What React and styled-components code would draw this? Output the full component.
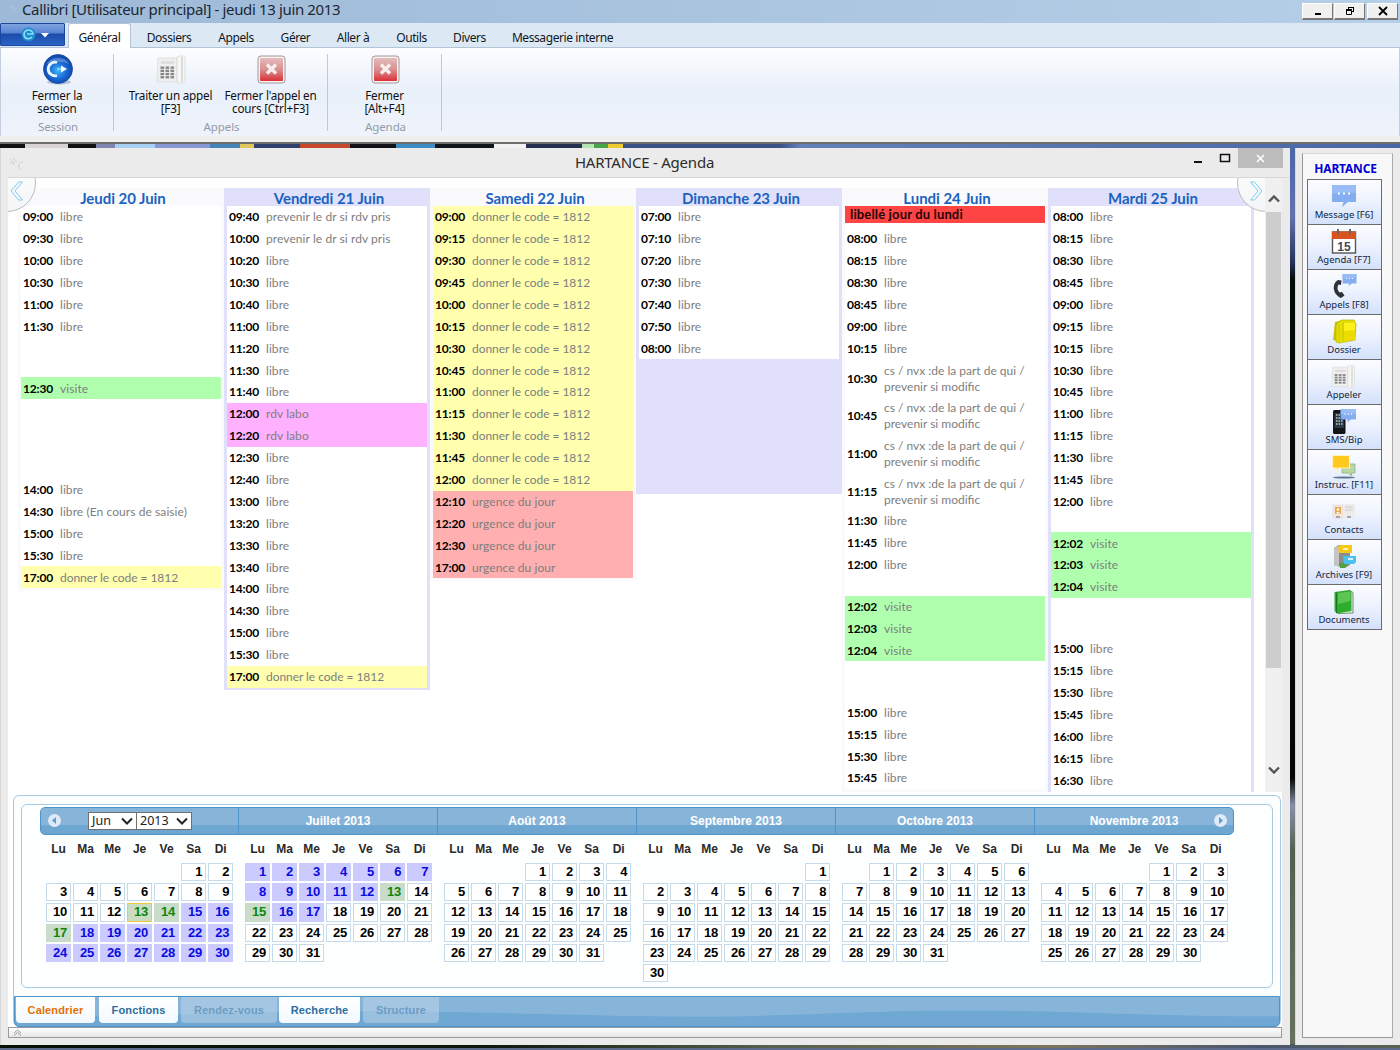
import React from "react";
import styled, { createGlobalStyle, css } from "styled-components";

const ui = `"Noto Sans", "Open Sans", sans-serif`;
const cal = `Lato, "Open Sans", sans-serif`;
const arial = `"Liberation Sans", Arial, sans-serif`;

const Global = createGlobalStyle`
  * { box-sizing: border-box; }
  body { margin: 0; width: 1400px; height: 1050px; overflow: hidden; }
`;

/* ---------- shell ---------- */
const Desktop = styled.div`
  width: 1400px; height: 1050px; display: flex; flex-direction: column; overflow: hidden;
  font-family: ${ui}; color: #111;
`;
const TitleBar = styled.header`
  height: 23px; display: flex; align-items: flex-start; justify-content: space-between;
  padding: 0 2px 0 9px; background: linear-gradient(90deg, #9db9d7, #b6cfe8);
`;
const AppTitle = styled.div`
  display: flex; gap: 3px; align-items: center; height: 18px; font-size: 15px; line-height: 17px;
  letter-spacing: -0.36px; color: #1c2630; white-space: nowrap;
`;
const WinButtons = styled.div`display: flex; padding-top: 3px;`;
const WinButton = styled.button`
  width: 31px; height: 17px; padding: 0; background: #f0f0f0; border: 1px solid #fff; margin-left: ${(p) => p.$ml || 1}px;
  border-right: 1px solid #777; border-bottom: 2px solid #777; display: flex; align-items: center; justify-content: center;
`;
const TabStrip = styled.nav`
  height: 25px; display: flex; background: #dde8f5; border-bottom: 1px solid #b4c4d8; align-items: flex-end;
`;
const AppButton = styled.button`
  width: 65px; height: 23px; margin: 0 3px 1px 0; padding: 0 0 0 4px; border: 1px solid #1c47a0; border-radius: 1px;
  background: linear-gradient(#7ea3e0 0, #5c86d4 40%, #1c4cab 50%, #2a63c6 100%);
  display: flex; align-items: center; justify-content: center; gap: 5px;
`;
const RibbonTab = styled.button`
  width: ${(p) => p.$w}px; height: 24px; padding: 3px 0 0; font: 12px/19px ${ui}; letter-spacing: -0.42px; color: #10181f;
  border: 1px solid transparent; border-bottom: 0; background: none; margin: 0; white-space: nowrap;
  ${(p) => p.$on && css`height: 25px; margin: 0 3px -1px 0; background: #fff; border-color: #b4c4d8; border-radius: 3px 3px 0 0; letter-spacing: -0.3px;`}
`;
const Ribbon = styled.div`
  height: 88px; display: flex; padding-top: 6px; border-left: 1px solid #c4d0e0; border-right: 1px solid #c4d0e0;
  background: linear-gradient(#fcfdff 0, #e9f0fa 50%, #eff3fb 100%);
`;
const Group = styled.section`
  width: ${(p) => p.$w}px; height: 77px; border-right: 1px solid #bcc8dc; display: grid; grid-template-rows: 62px 15px;
`;
const GroupItems = styled.div`display: flex; justify-content: center;`;
const GroupName = styled.div`
  text-align: center; font-size: 11.5px; line-height: 22px; letter-spacing: -0.1px; color: #949ba6; padding-left: 2px;
`;
const RibbonItem = styled.button`
  width: ${(p) => p.$w}px; border: 0; background: none; padding: 0; display: flex; flex-direction: column; align-items: center;
  font: 11.7px/13px ${ui}; letter-spacing: -0.2px; color: #111; white-space: pre; text-align: center;
  svg { margin: 0 0 4px 2px; flex: none; }
`;
const StatusEdge = styled.div`height: 8px; background: #eeeeec; border-bottom: 2px solid #6e6e6e;`;

/* ---------- work area ---------- */
const Backdrop = styled.main`
  flex: 1; padding-top: 4px; display: flex; gap: 5px; align-items: flex-start;
  background:
    linear-gradient(#5e6c8e, #5e6c8e) 0 100% / 100% 2px no-repeat,
    linear-gradient(90deg, #061006 0, #0c180c 35%, #56604c 55%, #7c755c 75%, #4a566e 90%, #5b6350) 0 100% / 100% 6px no-repeat,
    linear-gradient(90deg, #111 0 25px, #d8d4d8 25px 68px, #111 68px 96px, #8086b0 96px 115px, #a8d0f4 115px 155px, #8898d4 155px 210px, #4584b8 210px 240px, #e0c85c 240px 254px, #30406c 254px 300px, #c8482c 300px 350px, #101218 350px 396px, #3d8cc4 396px 435px, #12141c 435px 494px, #f2f2f2 494px 526px, #24304e 526px 582px, #b4e4b0 582px 594px, #48a448 594px 608px, #eecb30 608px 623px, #3a5288 623px 780px, #6480b8 800px, #4a66a4) 0 0 / 100% 4px no-repeat,
    linear-gradient(#4a66a8 0, #6272ae 8%, #26345c 13%, #060a0a 15%, #050805 70%, #8890a8 73%, #56604f 78%, #66715f 100%);
`;
const AgendaWindow = styled.section`
  width: 1290px; height: 897px; background: #ebebeb; border-left: 1px solid #d6d6d6; padding: 0 8px 0 7px;
`;
const AgendaBar = styled.div`height: 30px; display: grid; grid-template-columns: 120px 1fr 129px; margin-right: -8px; border-bottom: 1px solid #d6d6d6;`;
const BarMark = styled.div`padding: 6px 0 0 1px;`;
const AgendaTitle = styled.h1`
  margin: 0; text-align: center; font: 400 15px/28px ${ui}; letter-spacing: -0.22px; color: #2d2d2d;
`;
const BarButtons = styled.div`display: flex; justify-content: flex-end; margin-right: 7px; align-items: flex-start;`;
const BarButton = styled.button`
  width: ${(p) => p.$w}px; height: 20px; border: 0; padding: 0; background: ${(p) => p.$bg || "none"};
  display: flex; align-items: center; justify-content: center;
`;
const Client = styled.div`
  width: 1274px; height: 849px; background: #fff; display: flex; flex-direction: column;
`;
const Board = styled.div`
  height: 614px; flex: none; overflow: hidden; display: flex; padding: 10px 0 0 10px; position: relative;
`;
const NavCorner = styled.button`
  position: absolute; top: -24px; ${(p) => (p.$side === "left" ? "left: -30px;" : "right: -13px;")}
  width: 58px; height: 58px; border-radius: 50%; border: 1px solid #bcbcbc; background: linear-gradient(#fff, #f3f5f6); padding: 0;
  clip-path: ${(p) => (p.$side === "left" ? "inset(24px 0 0 30px)" : "inset(24px 30px 0 0)")};
  svg { position: absolute; top: 26px; ${(p) => (p.$side === "left" ? "left: 30px;" : "left: 11px;")} }
`;
const Day = styled.article`
  width: 206px; flex: none; align-self: flex-start; padding-bottom: 2.5px;
  background: ${(p) => (p.$tint ? "#e0e0fa" : "#fafafd")}; min-height: ${(p) => p.$min || 0}px;
`;
const DayHead = styled.h2`
  margin: 0; height: 18px; text-align: center; font: 700 15px/21px ${cal}; letter-spacing: -0.05px; color: #1a63c0; white-space: nowrap;
  padding-left: 4px;
`;
const DayBody = styled.div`margin: 0 3px; background: #fff;`;
const Banner = styled.div`
  height: 17px; margin-bottom: 5px; background: #ff4444; font: 700 13px/17px ${cal}; letter-spacing: 0.15px; padding-left: 5px; color: #220505;
`;
const Gap = styled.div`height: ${(p) => p.$h}px;`;
const Slot = styled.div`
  height: ${(p) => (p.$tall ? 37.7 : 21.9)}px; display: grid; grid-template-columns: 37px 1fr; align-items: center;
  padding: 0.7px 0 0 2px; background: ${(p) => p.$bg || "transparent"};
`;
const Time = styled.b`font: 700 12px/16px ${cal}; letter-spacing: -0.2px; color: #000;`;
const Label = styled.span`
  font: 400 12px/16px ${cal}; letter-spacing: ${(p) => p.$ls}px; color: #7e7e7e; white-space: pre-line;
`;
const Scroll = styled.div`
  margin-left: auto; margin-top: -10px; width: 17px; height: 614px; background: #f0f0f0; display: flex; flex-direction: column;
  align-items: center;
`;
const Thumb = styled.div`width: 15px; height: 456px; background: #cdcdcd;`;
const ArrowBox = styled.div`height: ${(p) => p.$h}px; display: flex; align-items: flex-end; padding-bottom: ${(p) => p.$pb}px;`;

/* ---------- calendar panel ---------- */
const Panel = styled.section`
  margin: 3px 1px 0 5px; height: 232px; border: 1px solid #a6c9e2; border-bottom: 0; border-radius: 6px 6px 7px 7px; background: #fcfdfd;
  padding: 8px 0 0 0; flex: none;
`;
const Inset = styled.div`
  margin: 0 7px 8px; height: 184px; border: 1px solid #a6c9e2; border-radius: 6px; padding: 2px 0 0 18px; background: #fdfefe;
`;
const CalHead = styled.div`
  width: 1194px; height: 28px; border: 1px solid #4c94c9; border-radius: 5px; display: flex;
  background: linear-gradient(#87b4d9 0 64%, #6ea6d2 68% 100%);
`;
const MonthName = styled.div`
  width: 199px; flex: none; display: flex; align-items: center; justify-content: center; color: #fff; font: 700 12px/26px ${arial};
  border-right: 1px solid #4c94c9; position: relative;
  &:first-child { width: 198px; } &:last-child { border-right: 0; width: 198px; }
`;
const RoundNav = styled.button`
  position: absolute; top: 6px; ${(p) => (p.$side === "left" ? "left: 7px;" : "right: 6px;")} width: 13px; height: 13px; border-radius: 50%;
  border: 0; padding: 0; background: #dfeaf8; display: flex; align-items: center; justify-content: center;
`;
const Picker = styled.button`
  width: ${(p) => p.$w}px; height: 18px; margin-right: -1px; border: 1px solid #707070; background: #fff; padding: 0 3px; display: flex;
  align-items: center; justify-content: space-between; font: 12.5px/16px ${ui}; color: #222;
`;
const Months = styled.div`display: flex; width: 1194px;`;
const Month = styled.div`
  width: 199px; padding: 4px 0 0 6px; display: grid; grid-template-columns: repeat(7, 25px); column-gap: 2.04px; row-gap: 2.1px;
  grid-template-rows: 22px repeat(6, 18.1px); flex: none;
`;
const WeekDay = styled.div`text-align: center; font: 700 12px/20px ${arial}; color: #2a2a2a;`;
const tones = {
  none: ["#fff", "#000", "#c5dbec"],
  blue: ["#cbcbff", "#0a0ae0", "#cbcbff"],
  green: ["#c9dcc9", "#0c860c", "#c9dcc9"],
  today: ["#cbdcc2", "#0c860c", "#f0c83c"],
};
const Cell = styled.div`
  border: 1px solid ${(p) => tones[p.$t][2]}; background: ${(p) => tones[p.$t][0]}; color: ${(p) => tones[p.$t][1]};
  text-align: right; padding-right: 3px; font: 700 13px/16px ${arial}; letter-spacing: -0.2px; font-kerning: none;
  grid-column-start: ${(p) => p.$col || "auto"};
`;
const BottomTabs = styled.div`
  position: relative; height: 31px; border: 1px solid #4c94c9; border-radius: 0 0 5px 5px; display: flex; padding-left: 1px;
  overflow: hidden; background: #6fa8d3;
`;
const Sheen = styled.svg`position: absolute; inset: 0; width: 100%; height: 100%;`;
const BTab = styled.button`
  position: relative; width: ${(p) => p.$w}px; height: 26px; margin-right: ${(p) => p.$mr || 3}px; border: 0; border-radius: 0 0 4px 4px; padding: 0;
  font: 700 11px/23px ${arial}; letter-spacing: 0.15px;
  background: ${(p) => (p.$off ? "rgba(196,216,236,.5)" : "linear-gradient(#fff, #f2f9fe)")};
  color: ${(p) => (p.$off ? "#6c9cc4" : p.$on ? "#e17009" : "#2e6e9e")};
`;
const Expander = styled.div`
  height: 11px; width: 1274px; border: 1px solid #9a9aa0; background: linear-gradient(#fff, #e6e6e6); padding: 0 0 0 4px; display: flex; align-items: center;
`;

/* ---------- side bar ---------- */
const SideWindow = styled.aside`width: 105px; height: 897px; background: #ebebeb; border-left: 1px solid #d8d8d8; padding: 5px 7px 7px 6px;`;
const SideInner = styled.div`
  height: 885px; background: #f8f8f8; border: 1px solid #999; border-right-color: #aaa; border-top-color: #d8d8d8;
  display: flex; flex-direction: column; align-items: center; padding: 5px 7px 0 0;
`;
const SideTitle = styled.h3`margin: 0; padding-left: 3px; font: 700 12px/20px ${ui}; letter-spacing: -0.2px; color: #0000d2;`;
const SideButton = styled.button`
  width: 75px; height: 46px; margin: 0 0 -1px 0; flex: none; border: 1px solid #6c6c6c; background: linear-gradient(#fbfcff, #eef3fe 45%, #d4e1fb);
  display: flex; flex-direction: column; align-items: center; justify-content: flex-start; padding: 4px 0 0; font: 9.5px/12px ${ui};
  letter-spacing: 0; color: #10243c; white-space: nowrap;
  svg { flex: none; }
`;

/* ---------- drawings ---------- */
const Chevron = ({ up, c = "#555", w = 12, s = 2.4 }) => (
  <svg width={w} height="8" viewBox="0 0 12 8"><path d={up ? "M1 6.5 6 1.5 11 6.5" : "M1 1.5 6 6.5 11 1.5"} fill="none" stroke={c} strokeWidth={s} /></svg>
);
const BigChevron = ({ flip }) => (
  <svg width="15" height="20" viewBox="0 0 15 20">
    <path transform={flip ? "translate(15 0) scale(-1 1)" : undefined} d="M9.5 1H13.5L6 10 13.5 19H9.5L2 10Z" fill="#eefaff" stroke="#8cc8e8" strokeWidth="1" />
  </svg>
);
const Bird = ({ c = "#cfcfcf", w = 16 }) => (
  <svg width={w} height="14" viewBox="0 0 16 14" fill="none" stroke={c}><path d="M1 2 6 6M1 5 6 8M4 1 8 5M14 5C10 5 9 8 10 11 11 12.500 12 12 12 12" /></svg>
);
const SessionIcon = () => (
  <svg width="32" height="31" viewBox="0 0 32 31">
    <defs><radialGradient id="ses" cx=".5" cy=".55" r=".6"><stop offset="0" stopColor="#3fb9f6" /><stop offset=".5" stopColor="#1a66d4" /><stop offset="1" stopColor="#0c3c9c" /></radialGradient></defs>
    <ellipse cx="17" cy="28" rx="12" ry="2.500" fill="#8894ac" opacity=".5" />
    <circle cx="16" cy="15" r="14.500" fill="url(#ses)" stroke="#1648a0" strokeWidth=".8" />
    <path d="M5 10C8 2 24 2 27 10 21 7 11 7 5 10Z" fill="#fff" opacity=".25" />
    <path d="M15 8.500A6.800 6.800 0 1 0 15 21.500" fill="none" stroke="#e8f8ff" strokeWidth="2.800" />
    <path d="M15 15H20" stroke="#7fd0fc" strokeWidth="2.500" /><path d="M19 11.500 25 15 19 18.500Z" fill="#fff" />
  </svg>
);
const PhoneIcon = ({ size = 31 }) => (
  <svg width={size} height={size} viewBox="0 0 31 31">
    <path d="M2 4H21V28H1Z" fill="#efefef" stroke="#dcdcdc" strokeWidth=".8" /><rect x="5" y="7" width="13" height="3" fill="#dedede" />
    {[0, 1, 2, 3].map((r) => [0, 1, 2].map((c) => <rect key={r + "-" + c} x={4.5 + c * 5} y={12.500 + r * 3.2} width="3.600" height="2.300" fill="#868686" />))}
    <rect x="21" y="2" width="8" height="27" rx="2" fill="#f6f6f6" stroke="#d8d8d4" strokeWidth=".8" /><path d="M26 3V28" stroke="#dcdcd8" strokeWidth="2" />
  </svg>
);
const CloseIcon = () => (
  <svg width="31" height="31" viewBox="0 0 31 31">
    <defs><linearGradient id="clo" x1="0" y1="0" x2="0" y2="1"><stop offset="0" stopColor="#e4bcbc" /><stop offset=".5" stopColor="#d89090" /><stop offset="1" stopColor="#dc3038" /></linearGradient></defs>
    <rect x="2" y="2" width="27" height="27" rx="3" fill="#f6f2f2" stroke="#a89494" />
    <rect x="4" y="4" width="23" height="23" rx="1" fill="url(#clo)" />
    <path d="M11 10.500 20 19.500M20 10.500 11 19.500" stroke="#f6eeee" strokeWidth="3.400" />
  </svg>
);
const Bubble = () => <g><path d="M1 1H25V18H17L11 23 12.500 18H1Z" fill="#84aef0" /><path d="M1 1H25V9Q13 7 1 10Z" fill="#98bdf6" /><path d="M7 9.500h2M12 9.500h2M17 9.500h2" stroke="#fff" strokeWidth="2" /></g>;
const drawings = {
  message: <Bubble />,
  agenda: (<g><rect x="1.500" y="3" width="23" height="21" fill="#fff" stroke="#555" strokeWidth="1.400" /><rect x="1" y="2.500" width="24" height="7.500" fill="#d85420" /><path d="M7 0V5M19 0V5" stroke="#666" strokeWidth="2" /><text x="13" y="21.500" fontSize="12" fontWeight="700" textAnchor="middle" fill="#404a54" fontFamily="Liberation Sans, sans-serif">15</text></g>),
  calls: (<g><g transform="translate(11 -1) scale(.58)"><Bubble /></g><path d="M7 6C1 9 1 20 10 24L13.500 21.500 11 18 8.500 18.500C6 16 6 13 7.500 10.500L10 11 10.500 6.500Z" fill="#2e3238" /></g>),
  folder: (<g><path d="M2 21 4 3 12 1V23Z" fill="#c8c400" /><path d="M5 23V6L10 1H23L25 5 24 21 8 24Z" fill="#e6e000" stroke="#b8b000" strokeWidth=".7" /><path d="M12 3V22M8 5V22" stroke="#c4bc00" strokeWidth=".8" /><path d="M13 4H24V20L13 22Z" fill="#fff21c" /><path d="M13 12 24 11V20L13 22Z" fill="#ecdc00" /></g>),
  phone: <PhoneIcon size={25} />,
  sms: (<g><rect x="2" y="1" width="12.500" height="24" rx="1.500" fill="#151515" /><rect x="3.500" y="4" width="9.500" height="15" fill="#2a3a4c" /><path d="M5 6h7M5 9h7M5 12h7M5 15h7" stroke="#b8c8b0" strokeWidth="1.500" strokeDasharray="1.500 1" /><g transform="translate(9 -1) scale(.64)"><Bubble /></g></g>),
  instr: (<g><ellipse cx="13" cy="23.500" rx="11" ry="1" fill="#64748c" /><path d="M11 10H24V19H20L21 22 17 19H11Z" fill="#b8d8a4" stroke="#90b080" strokeWidth=".8" /><path d="M1.500 1.500H18.500V14H8L6 17V14H1.500Z" fill="#ffc81c" stroke="#fff2c0" strokeWidth="1.200" /></g>),
  contacts: (<g><rect x="2" y="6" width="10" height="13" fill="#f4e8dc" stroke="#ddd" strokeWidth=".7" /><rect x="4" y="8" width="6" height="7" fill="#e8a850" /><circle cx="7" cy="10.500" r="1.300" fill="#fff" /><path d="M4.800 14.500Q7 11 9.200 14.500Z" fill="#fff" /><rect x="12.500" y="5" width="11.500" height="14" fill="#ececec" /><path d="M14 8h8M14 11h8" stroke="#ccc" /><path d="M5 18h4M16 18h4" stroke="#8c8ca0" strokeWidth="1.500" /></g>),
  archive: (<g><path d="M3 4 8 1H19V21L14 24 3 21Z" fill="#8c8c8c" /><path d="M3 4 8 2V23L3 21Z" fill="#c4c4c4" /><path d="M8 19H17L14 24H9Z" fill="#50a040" /><path d="M7 3.500 9 1H21V9H8Z" fill="#f8c818" /><path d="M12 12H25V18L23 20H13Z" fill="#4cc0f0" /><path d="M12 5h5M17 15h5" stroke="#fff" strokeWidth="1.500" /></g>),
  docs: (<g><path d="M18 1 22 3.500V24L7 24.500 5 23Z" fill="#e8ece4" stroke="#4c7c4c" strokeWidth=".8" /><path d="M3.500 3 18.500 1 20.500 3V22L6 24.500 3.500 22Z" fill="#2eac2e" /><path d="M7 4 19.500 2.500V12L7 15Z" fill="#70d064" opacity=".7" /><path d="M5.500 3.500V24" stroke="#167818" /></g>),
};
const SideIcon = ({ name }) => <svg width="26" height="25" viewBox="0 0 26 25">{drawings[name]}</svg>;

/* ---------- data ---------- */
const Y = "#ffffae", G = "#b0ffae", P = "#ffb0ff", R = "#ffafaf";
const rows = (times, label = "libre", bg) => times.split(" ").map((t) => ({ t, label, bg }));
const gap = (h) => [{ gap: h }];
const code = "donner le code = 1812";
const days = [
  { name: "Jeudi 20 Juin", slots: [...rows("09:00 09:30 10:00 10:30 11:00 11:30"), ...gap(40), ...rows("12:30", "visite", G), ...gap(79.7), ...rows("14:00"), ...rows("14:30", "libre (En cours de saisie)"), ...rows("15:00 15:30"), ...rows("17:00", code, Y)] },
  { name: "Vendredi 21 Juin", tint: true, slots: [...rows("09:40 10:00", "prevenir le dr si rdv pris"), ...rows("10:20 10:30 10:40 11:00 11:20 11:30 11:40"), ...rows("12:00 12:20", "rdv labo", P), ...rows("12:30 12:40 13:00 13:20 13:30 13:40 14:00 14:30 15:00 15:30"), ...rows("17:00", code, Y)] },
  { name: "Samedi 22 Juin", slots: [...rows("09:00 09:15 09:30 09:45 10:00 10:15 10:30 10:45 11:00 11:15 11:30 11:45 12:00", code, Y), ...rows("12:10 12:20 12:30 17:00", "urgence du jour", R)] },
  { name: "Dimanche 23 Juin", tint: true, min: 305.5, slots: rows("07:00 07:10 07:20 07:30 07:40 07:50 08:00") },
  { name: "Lundi 24 Juin", banner: "libellé jour du lundi", slots: [...rows("08:00 08:15 08:30 08:45 09:00 10:15"), ...rows("10:30 10:45 11:00 11:15", "cs / nvx :de la part de qui /\nprevenir si modific").map((s) => ({ ...s, tall: true })), ...rows("11:30 11:45 12:00"), ...gap(20), ...rows("12:02 12:03 12:04", "visite", G), ...gap(40), ...rows("15:00 15:15 15:30 15:45")] },
  { name: "Mardi 25 Juin", tint: true, slots: [...rows("08:00 08:15 08:30 08:45 09:00 09:15 10:15 10:30 10:45 11:00 11:15 11:30 11:45 12:00"), ...gap(19.8), ...rows("12:02 12:03 12:04", "visite", G), ...gap(40.1), ...rows("15:00 15:15 15:30 15:45 16:00 16:15 16:30"), ...gap(22)] },
];
const juneTone = (d) => (d === 13 ? "today" : d === 14 || d === 17 ? "green" : d > 14 ? "blue" : "none");
const julyTone = (d) => (d === 13 || d === 15 ? "green" : d < 13 || d === 16 || d === 17 ? "blue" : "none");
const months = [
  { name: "Juin 2013", start: 6, len: 30, tone: juneTone },
  { name: "Juillet 2013", start: 1, len: 31, tone: julyTone },
  { name: "Août 2013", start: 4, len: 31 },
  { name: "Septembre 2013", start: 7, len: 30 },
  { name: "Octobre 2013", start: 2, len: 31 },
  { name: "Novembre 2013", start: 5, len: 30 },
];
const side = [["message", "Message [F6]"], ["agenda", "Agenda [F7]"], ["calls", "Appels [F8]"], ["folder", "Dossier"], ["phone", "Appeler"], ["sms", "SMS/Bip"], ["instr", "Instruc. [F11]"], ["contacts", "Contacts"], ["archive", "Archives [F9]"], ["docs", "Documents"]];
const ribbonTabs = [["Dossiers", 70], ["Appels", 64], ["Gérer", 55], ["Aller à", 60], ["Outils", 57], ["Divers", 59], ["Messagerie interne", 127]];

export default function App() {
  return (
    <Desktop>
      <Global />
      <TitleBar>
        <AppTitle><Bird c="#b4c8dc" w={10} />Callibri [Utilisateur principal] - jeudi 13 juin 2013</AppTitle>
        <WinButtons>
          <WinButton><svg width="14" height="10"><path d="M4 8h6" stroke="#000" strokeWidth="2" /></svg></WinButton>
          <WinButton><svg width="10" height="10" fill="none" stroke="#000"><path d="M3.500 3V1M3 1.500H9M8.500 1V6M9 5.500H7M1 4.500H6.500V8.500H1.500V4M1 3.500H7" /></svg></WinButton>
          <WinButton $ml={2}><svg width="10" height="10"><path d="M1 1 9 9M9 1 1 9" stroke="#000" strokeWidth="1.800" /></svg></WinButton>
        </WinButtons>
      </TitleBar>
      <TabStrip>
        <AppButton>
          <svg width="15" height="15" viewBox="0 0 15 15"><circle cx="7.500" cy="7.500" r="7" fill="#1c8ccc" /><path d="M3 8a4.500 4.500 0 1 1 9-1H6M3 8a4.500 4.500 0 0 0 8 2" fill="none" stroke="#8adcf8" strokeWidth="1.600" /></svg>
          <svg width="8" height="6"><path d="M0 1H8L4 5.500Z" fill="#fff" /></svg>
        </AppButton>
        <RibbonTab $w={63} $on>Général</RibbonTab>
        {ribbonTabs.map(([t, w]) => <RibbonTab key={t} $w={w}>{t}</RibbonTab>)}
      </TabStrip>
      <Ribbon>
        <Group $w={113}>
          <GroupItems><RibbonItem $w={80}><SessionIcon />{"Fermer la\nsession"}</RibbonItem></GroupItems>
          <GroupName>Session</GroupName>
        </Group>
        <Group $w={214}>
          <GroupItems>
            <RibbonItem $w={100}><PhoneIcon />{"Traiter un appel\n[F3]"}</RibbonItem>
            <RibbonItem $w={100}><CloseIcon />{"Fermer l'appel en\ncours [Ctrl+F3]"}</RibbonItem>
          </GroupItems>
          <GroupName>Appels</GroupName>
        </Group>
        <Group $w={114}>
          <GroupItems><RibbonItem $w={80}><CloseIcon />{"Fermer\n[Alt+F4]"}</RibbonItem></GroupItems>
          <GroupName>Agenda</GroupName>
        </Group>
      </Ribbon>
      <StatusEdge />
      <Backdrop>
        <AgendaWindow>
          <AgendaBar>
            <BarMark><Bird /></BarMark>
            <AgendaTitle>HARTANCE - Agenda</AgendaTitle>
            <BarButtons>
              <BarButton $w={27}><svg width="10" height="14"><path d="M1 11h8" stroke="#111" strokeWidth="2" /></svg></BarButton>
              <BarButton $w={27}><svg width="12" height="10"><path d="M1 1.500H10.500V8.500H1.500V1" fill="none" stroke="#111" strokeWidth="1.500" /></svg></BarButton>
              <BarButton $w={45} $bg="#bcbcbc"><svg width="9" height="9"><path d="M1 1 8 8M8 1 1 8" stroke="#fff" strokeWidth="1.600" /></svg></BarButton>
            </BarButtons>
          </AgendaBar>
          <Client>
            <Board>
              {days.map((d) => (
                <Day key={d.name} $tint={d.tint} $min={d.min}>
                  <DayHead>{d.name}</DayHead>
                  <DayBody>
                    {d.banner && <Banner>{d.banner}</Banner>}
                    {d.slots.map((s, i) => s.gap ? <Gap key={i} $h={s.gap} /> : (
                      <Slot key={i} $bg={s.bg} $tall={s.tall}>
                        <Time>{s.t}</Time>
                        <Label $ls={s.label === code ? -0.05 : s.tall ? 0 : 0.08}>{s.label}</Label>
                      </Slot>
                    ))}
                  </DayBody>
                </Day>
              ))}
              <NavCorner $side="left"><BigChevron /></NavCorner>
              <NavCorner $side="right"><BigChevron flip /></NavCorner>
              <Scroll>
                <ArrowBox $h={34} $pb={9}><Chevron up /></ArrowBox>
                <Thumb />
                <ArrowBox $h={106} $pb={0}><Chevron /></ArrowBox>
              </Scroll>
            </Board>
            <Panel>
              <Inset>
                <CalHead>
                  {months.map((m, i) => (
                    <MonthName key={m.name}>
                      {i === 0 && <RoundNav $side="left"><svg width="5" height="7"><path d="M4 0V7L0 3.500Z" fill="#5a9fd0" /></svg></RoundNav>}
                      {i === 0 ? (<><Picker $w={49}>Jun<Chevron c="#222" s={2} /></Picker><Picker $w={56}>2013<Chevron c="#222" s={2} /></Picker></>) : m.name}
                      {i === 5 && <RoundNav $side="right"><svg width="5" height="7"><path d="M1 0V7L5 3.500Z" fill="#5a9fd0" /></svg></RoundNav>}
                    </MonthName>
                  ))}
                </CalHead>
                <Months>
                  {months.map((m) => (
                    <Month key={m.name}>
                      {["Lu", "Ma", "Me", "Je", "Ve", "Sa", "Di"].map((w) => <WeekDay key={w}>{w}</WeekDay>)}
                      {Array.from({ length: m.len }, (_, i) => i + 1).map((d) => (
                        <Cell key={d} $t={m.tone ? m.tone(d) : "none"} $col={d === 1 ? m.start : undefined}>{d}</Cell>
                      ))}
                    </Month>
                  ))}
                </Months>
              </Inset>
              <BottomTabs>
                <Sheen viewBox="0 0 1266 30" preserveAspectRatio="none">
                  <path d="M0 0H1266V20C1130 20 1060 14 950 14S760 22 640 20 430 14 320 15 100 22 0 18Z" fill="#87b5da" />
                </Sheen>
                <BTab $w={79} $on $mr={4}>Calendrier</BTab>
                <BTab $w={79}>Fonctions</BTab>
                <BTab $w={96} $off $mr={2}>Rendez-vous</BTab>
                <BTab $w={81}>Recherche</BTab>
                <BTab $w={76} $off>Structure</BTab>
              </BottomTabs>
            </Panel>
          </Client>
          <Expander><svg width="9" height="7" fill="none" stroke="#999"><path d="M1 4 4.500 1 8 4M1 6.500 4.500 3.500 8 6.500" /></svg></Expander>
        </AgendaWindow>
        <SideWindow>
          <SideInner>
            <SideTitle>HARTANCE</SideTitle>
            {side.map(([icon, label]) => <SideButton key={icon}><SideIcon name={icon} />{label}</SideButton>)}
          </SideInner>
        </SideWindow>
      </Backdrop>
    </Desktop>
  );
}
